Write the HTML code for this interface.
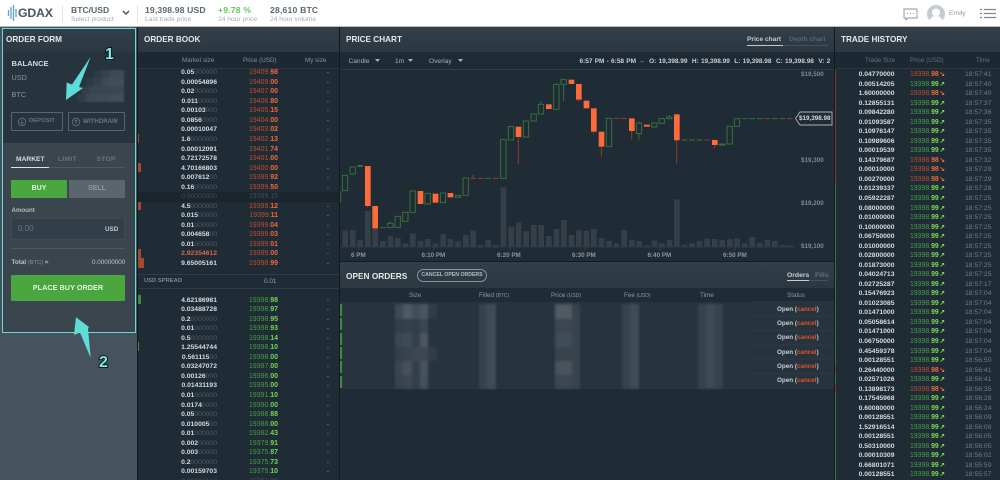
<!DOCTYPE html>
<html><head><meta charset="utf-8"><style>
html,body{margin:0;padding:0;width:1000px;height:480px;overflow:hidden;background:#1f2b35}
body{font-family:"Liberation Sans",sans-serif;position:relative;filter:blur(.35px)}
.x{position:absolute;white-space:nowrap;margin:0}
.h{font-size:8.2px;font-weight:700;color:#e4e8ea}
.bar{position:absolute;background:linear-gradient(#333f48,#2c3841)}
.t{font-size:6.3px;color:#87929a}
.ob,.th{position:absolute;font-size:6.8px}
.ob p,.th p{margin:0;height:9.54px;line-height:9.54px;position:relative}
.ob a,.th a{position:absolute;font-weight:700;color:#d5dbde;text-decoration:none}
.ob a i,.th a i{font-style:normal;color:#515c64;font-weight:400}
.ob a{right:122px}
.ob b{position:absolute;right:61px;font-size:6.95px}
.ob s{position:absolute;right:10px;text-decoration:none;color:#8f9aa1}
.ob u{text-decoration:none;font-weight:700}
.ob b,.th b{font-weight:400}
.as b{color:#c04e2c}.as u{color:#f4693a}
.bs b{color:#46a046}.bs u{color:#74d954}
.dm a,.dm a i,.dm b,.dm u,.dm s{color:#434e57!important;font-weight:400}
.th a{right:105.5px}
.th b{position:absolute;left:75px;font-size:6.9px}
.th em{position:absolute;left:104.5px;font-style:normal;font-size:6.5px;font-weight:700}
.th s{position:absolute;right:8.5px;text-decoration:none;color:#727e86}
.th u{text-decoration:none;font-weight:700}
.g b{color:#46a046}.g u,.g em{color:#7ad956}
.r b{color:#c04e2c}.r u,.r em{color:#f4693a}
.st{font-size:6.3px;color:#c8ced2;font-weight:700;left:777px}
.st span{color:#d9552e}
.db{position:absolute;left:138px;background:#a04a2e}
.pl{position:absolute;border:1px solid #59646c;border-radius:1px;box-sizing:border-box;color:#69747c;font-size:6.2px;font-weight:700}
.num{font-size:16px;font-weight:700;color:#7ce8e2;-webkit-text-stroke:2px #10181d;paint-order:stroke fill}
</style></head><body>

<!-- Top bar -->
<div class="x" style="left:0;top:0;width:1000px;height:26px;background:#fff;border-bottom:1px solid #b9bec2"></div>
<svg class="x" style="left:7px;top:5px" width="10" height="16"><path d="M1.500 5v6M4 2v12M6.500 0v16M9 4v8" stroke="#5f9fd0" stroke-width="1.300" fill="none"/></svg>
<div class="x" style="left:18px;top:6px;font-size:12.300px;font-weight:700;color:#49565f;letter-spacing:-.2px">GDAX</div>
<div class="x" style="left:62px;top:5px;width:1px;height:17px;background:#e0e3e5"></div>
<div class="x" style="left:137px;top:5px;width:1px;height:17px;background:#e0e3e5"></div>
<div class="x" style="left:71px;top:5px;font-size:8.600px;font-weight:700;color:#5b676f">BTC/USD</div>
<div class="x" style="left:71px;top:16px;font-size:6.700px;color:#a3abb1">Select product</div>
<svg class="x" style="left:122px;top:10px" width="8" height="6"><path d="M1 1l3 3 3-3" stroke="#444f57" stroke-width="1.400" fill="none"/></svg>
<div class="x" style="left:145px;top:5px;font-size:8.600px;font-weight:700;color:#5b676f;letter-spacing:.15px">19,398.98 USD</div>
<div class="x" style="left:145px;top:16px;font-size:6.700px;color:#a3abb1">Last trade price</div>
<div class="x" style="left:218px;top:5px;font-size:8.600px;font-weight:700;color:#66c65a;letter-spacing:.2px">+9.78 %</div>
<div class="x" style="left:218px;top:16px;font-size:6.700px;color:#a3abb1">24 hour price</div>
<div class="x" style="left:270px;top:5px;font-size:8.600px;font-weight:700;color:#5b676f;letter-spacing:.2px">28,610 BTC</div>
<div class="x" style="left:270px;top:16px;font-size:6.700px;color:#a3abb1">24 hour volume</div>
<svg class="x" style="left:903px;top:8px" width="15" height="13"><path d="M1 1h13v9H5l-2 2v-2H1z" fill="none" stroke="#8b959c" stroke-width=".9"/><path d="M4 5.500h1M7 5.500h1M10 5.500h1" stroke="#8b959c"/></svg>
<svg class="x" style="left:927px;top:5px" width="18" height="18"><circle cx="9" cy="9" r="9" fill="#c6cbcf"/><circle cx="9" cy="7.500" r="4" fill="#fff"/><path d="M2.500 16c1-4 4-5 6.500-5s5.500 1 6.500 5a9 9 0 0 1-13 0z" fill="#fff"/></svg>
<div class="x" style="left:949px;top:10px;font-size:6.800px;color:#8f989f">Emily</div>
<svg class="x" style="left:980px;top:8px" width="16" height="11"><path d="M0 1.500h2M4 1.500h12M0 5.500h2M4 5.500h12M0 9.500h2M4 9.500h12" stroke="#7d878e" stroke-width="1.200"/></svg>

<!-- Left column -->
<div class="x" style="left:0;top:27px;width:137px;height:453px;background:#47535c"></div>
<div class="bar" style="left:3px;top:29px;width:132px;height:23px"></div>
<div class="x" style="left:3px;top:52px;width:132px;height:91px;background:#27333d"></div>
<div class="x" style="left:3px;top:143px;width:132px;height:190px;background:#3a454e"></div>
<div class="x h" style="left:6px;top:35px">ORDER FORM</div>
<div class="x" style="left:11.500px;top:59px;font-size:7.600px;font-weight:700;color:#d5dadd">BALANCE</div>
<div class="x" style="left:11.500px;top:73px;font-size:7.300px;color:#8b959c">USD</div>
<div class="x" style="left:11.500px;top:90px;font-size:7.300px;color:#8b959c">BTC</div>
<svg class="x" style="left:76px;top:68px;filter:blur(.9px)" width="52" height="36"><g fill="#4a555e"><rect x="18" y="2" width="8" height="8" opacity=".25"/><rect x="26" y="2" width="8" height="8" opacity=".5"/><rect x="34" y="2" width="8" height="8" opacity=".7"/><rect x="42" y="2" width="6" height="8" opacity=".7"/><rect x="10" y="10" width="8" height="8" opacity=".2"/><rect x="18" y="10" width="8" height="8" opacity=".4"/><rect x="26" y="10" width="8" height="8" opacity=".7"/><rect x="34" y="10" width="8" height="8" opacity=".8"/><rect x="42" y="10" width="6" height="8" opacity=".8"/><rect x="6" y="18" width="8" height="8" opacity=".35"/><rect x="14" y="18" width="8" height="8" opacity=".55"/><rect x="22" y="18" width="8" height="8" opacity=".55"/><rect x="30" y="18" width="8" height="8" opacity=".6"/><rect x="38" y="18" width="10" height="8" opacity=".65"/><rect x="2" y="26" width="8" height="8" opacity=".3"/><rect x="10" y="26" width="8" height="8" opacity=".65"/><rect x="18" y="26" width="8" height="8" opacity=".7"/><rect x="26" y="26" width="8" height="8" opacity=".7"/><rect x="34" y="26" width="14" height="8" opacity=".8"/></g></svg>
<div class="pl" style="left:11px;top:112px;width:52px;height:19px;line-height:17px;padding-left:17px;font-size:5.900px">DEPOSIT</div>
<div class="pl" style="left:68px;top:112px;width:57px;height:19px;line-height:17px;padding-left:14px">WITHDRAW</div>
<svg class="x" style="left:17px;top:117px" width="10" height="10"><circle cx="5" cy="5" r="3.800" fill="none" stroke="#69747c" stroke-width=".8"/><path d="M5 3v4M3.500 5.500L5 7l1.500-1.500" stroke="#69747c" stroke-width=".7" fill="none"/></svg>
<svg class="x" style="left:71px;top:117px" width="10" height="10"><circle cx="5" cy="5" r="3.800" fill="none" stroke="#69747c" stroke-width=".8"/><path d="M5 7V3M3.500 4.500L5 3l1.500 1.500" stroke="#69747c" stroke-width=".7" fill="none"/></svg>
<div class="x" style="left:16px;top:156px;font-size:6.700px;font-weight:700;color:#d6dbde">MARKET</div>
<div class="x" style="left:58px;top:156px;font-size:6.700px;font-weight:700;color:#69747c;letter-spacing:.3px">LIMIT</div>
<div class="x" style="left:96.500px;top:156px;font-size:6.700px;font-weight:700;color:#69747c;letter-spacing:.3px">STOP</div>
<div class="x" style="left:11px;top:167px;width:114px;height:1px;background:#4d5861"></div>
<div class="x" style="left:11px;top:167px;width:38px;height:1px;background:#dfe3e5"></div>
<div class="x" style="left:11px;top:180px;width:56px;height:18px;background:#4aa63e;color:#dff0da;font-size:7px;font-weight:700;line-height:18px;text-align:center">BUY</div>
<div class="x" style="left:69px;top:180px;width:56px;height:18px;background:#5a656d;color:#8f999f;font-size:7px;font-weight:700;line-height:18px;text-align:center">SELL</div>
<div class="x" style="left:11.500px;top:207px;font-size:6.200px;font-weight:700;color:#b3bbc0">Amount</div>
<div class="x" style="left:11px;top:218px;width:114px;height:22px;background:#333f48;border:1px solid #3f4a53;box-sizing:border-box"></div>
<div class="x" style="left:18px;top:224px;font-size:8px;color:#68737b">0.00</div>
<div class="x" style="left:105px;top:226px;font-size:6.300px;font-weight:700;color:#c1c8cc">USD</div>
<div class="x" style="left:11px;top:248px;width:114px;height:1px;background:#4d5861"></div>
<div class="x" style="left:11.500px;top:258.500px;font-size:6.300px;font-weight:700;color:#bac1c6">Total <span style="font-weight:400;color:#8a949b;font-size:5.800px">(BTC)</span> ≈</div>
<div class="x" style="left:92px;top:258.500px;font-size:6.300px;color:#c1c8cc">0.00000000</div>
<div class="x" style="left:11px;top:275px;width:114px;height:26px;background:#4aa63e;border-radius:1px;color:#e6f2e2;font-size:7.300px;font-weight:700;line-height:26px;text-align:center">PLACE BUY ORDER</div>
<div class="x" style="left:2px;top:28px;width:134px;height:305px;box-sizing:border-box;border:1.500px solid #63dcd6"></div>
<svg class="x" style="left:0;top:27px" width="137" height="453"><path d="M90.700 29.700L79 60l4 1L66 73l.7-17.500 5.300 2z" fill="#5fdcd8"/><path d="M76 290.300L74 308l6-2.500 10.700 25.500-2.700-29.500 1-1.500z" fill="#5fdcd8"/></svg>
<div class="x num" style="left:105px;top:45.500px">1</div>
<div class="x num" style="left:99px;top:353.500px">2</div>

<!-- Order book -->
<div class="x" style="left:137px;top:27px;width:1px;height:453px;background:#12191f"></div>
<div class="bar" style="left:138px;top:27px;width:201px;height:25px"></div>
<div class="x h" style="left:144px;top:35px">ORDER BOOK</div>
<div class="x" style="left:138px;top:52px;width:201px;height:17px;background:#1c2832;border-bottom:1px solid #2c3841;box-sizing:border-box"></div>
<div class="x t" style="left:182px;top:57px">Market size</div>
<div class="x t" style="left:243px;top:57px">Price (USD)</div>
<div class="x t" style="left:305px;top:57px">My size</div>
<div class="db" style="top:134px;width:1px;height:9px"></div>
<div class="db" style="top:163px;width:3px;height:9px"></div>
<div class="db" style="top:201px;width:3px;height:9px"></div>
<div class="db" style="top:249px;width:3px;height:9px"></div>
<div class="db" style="top:258px;width:6px;height:10px"></div>
<div class="db" style="top:295px;width:3px;height:9px;background:#3f8a3a"></div>
<div class="db" style="top:342px;width:1px;height:9px;background:#3f8a3a"></div>
<div class="x" style="left:138px;top:192px;width:201px;height:9.500px;background:#1a252e"></div>
<div class="ob as" style="left:138px;top:68.300px;width:201px">
<p><a>0.05<i>000000</i></a><b>19409.<u>98</u></b><s>-</s></p>
<p><a>0.00054896</a><b>19409.<u>00</u></b><s>-</s></p>
<p><a>0.02<i>000000</i></a><b>19407.<u>00</u></b><s>-</s></p>
<p><a>0.011<i>00000</i></a><b>19406.<u>80</u></b><s>-</s></p>
<p><a>0.00103<i>000</i></a><b>19405.<u>15</u></b><s>-</s></p>
<p><a>0.0856<i>0000</i></a><b>19404.<u>00</u></b><s>-</s></p>
<p><a>0.00010047</a><b>19403.<u>02</u></b><s>-</s></p>
<p><a>1.6<i>0000000</i></a><b>19402.<u>13</u></b><s>-</s></p>
<p><a>0.00012091</a><b>19401.<u>74</u></b><s>-</s></p>
<p><a>0.72172578</a><b>19401.<u>00</u></b><s>-</s></p>
<p><a>4.70166803</a><b>19400.<u>00</u></b><s>-</s></p>
<p><a>0.007612<i>00</i></a><b>19399.<u>92</u></b><s>-</s></p>
<p><a>0.16<i>000000</i></a><b>19399.<u>50</u></b><s>-</s></p>
<p class="dm"><a>0.50000000</a><b>19399.<u>15</u></b><s>-</s></p>
<p><a>4.5<i>0000000</i></a><b>19399.<u>12</u></b><s>-</s></p>
<p><a>0.015<i>00000</i></a><b>19399.<u>11</u></b><s>-</s></p>
<p><a>0.01<i>000000</i></a><b>19399.<u>04</u></b><s>-</s></p>
<p><a>0.004658<i>00</i></a><b>19399.<u>03</u></b><s>-</s></p>
<p><a>0.01<i>000000</i></a><b>19399.<u>01</u></b><s>-</s></p>
<p><a style="color:#d0694a">2.92354612</a><b>19399.<u>00</u></b><s style="color:#d0694a">-</s></p>
<p><a>9.65005161</a><b>19398.<u>99</u></b><s>-</s></p>
</div>
<div class="x" style="left:138px;top:274px;width:201px;height:15px;border-top:1px solid #303c45;border-bottom:1px solid #303c45;box-sizing:border-box"></div>
<div class="x" style="left:144px;top:278px;font-size:5.800px;font-weight:700;color:#7d8890">USD SPREAD</div>
<div class="x" style="left:264px;top:278px;font-size:6.400px;color:#98a2a8">0.01</div>
<div class="ob bs" style="left:138px;top:295.700px;width:201px">
<p><a>4.62186981</a><b>19398.<u>98</u></b><s>-</s></p>
<p><a>0.03488728</a><b>19398.<u>97</u></b><s>-</s></p>
<p><a>0.2<i>0000000</i></a><b>19398.<u>95</u></b><s>-</s></p>
<p><a>0.01<i>000000</i></a><b>19398.<u>93</u></b><s>-</s></p>
<p><a>0.5<i>0000000</i></a><b>19398.<u>14</u></b><s>-</s></p>
<p><a>1.25544744</a><b>19398.<u>10</u></b><s>-</s></p>
<p><a>0.561115<i>00</i></a><b>19398.<u>00</u></b><s>-</s></p>
<p><a>0.03247072</a><b>19397.<u>00</u></b><s>-</s></p>
<p><a>0.00126<i>000</i></a><b>19396.<u>00</u></b><s>-</s></p>
<p><a>0.01431193</a><b>19395.<u>00</u></b><s>-</s></p>
<p><a>0.01<i>000000</i></a><b>19391.<u>10</u></b><s>-</s></p>
<p><a>0.0174<i>0000</i></a><b>19390.<u>00</u></b><s>-</s></p>
<p><a>0.05<i>000000</i></a><b>19388.<u>88</u></b><s>-</s></p>
<p><a>0.010005<i>00</i></a><b>19388.<u>00</u></b><s>-</s></p>
<p><a>0.01<i>000000</i></a><b>19382.<u>43</u></b><s>-</s></p>
<p><a>0.002<i>00000</i></a><b>19379.<u>91</u></b><s>-</s></p>
<p><a>0.003<i>00000</i></a><b>19375.<u>87</u></b><s>-</s></p>
<p><a>0.2<i>0000000</i></a><b>19375.<u>73</u></b><s>-</s></p>
<p><a>0.00159703</a><b>19375.<u>10</u></b><s>-</s></p>
<p class="dm"><a>0.00010133</a><b>19351.<u>96</u></b><s>-</s></p>
</div>

<!-- Price chart -->
<div class="x" style="left:339px;top:27px;width:1px;height:453px;background:#12191f"></div>
<div class="bar" style="left:340px;top:27px;width:494px;height:25px"></div>
<div class="x h" style="left:346px;top:35px">PRICE CHART</div>
<div class="x" style="left:747px;top:36px;font-size:6.600px;font-weight:700;color:#c3cacf">Price chart</div>
<div class="x" style="left:789px;top:36px;font-size:6.600px;font-weight:700;color:#59646c">Depth chart</div>
<div class="x" style="left:747px;top:45px;width:81px;height:1px;background:#46525b"></div>
<div class="x" style="left:747px;top:45px;width:36px;height:1px;background:#c3cacf"></div>
<div class="x" style="left:340px;top:52px;width:494px;height:18px;border-bottom:1px solid #323e47;box-sizing:border-box;background:#1e2a34"></div>
<div class="x" style="left:348.500px;top:58px;font-size:6.600px;color:#a7b0b6">Candle</div>
<div class="x" style="left:395px;top:58px;font-size:6.600px;color:#a7b0b6">1m</div>
<div class="x" style="left:429px;top:58px;font-size:6.600px;color:#a7b0b6">Overlay</div>
<svg class="x" style="left:340px;top:52px" width="140" height="18"><path d="M35 7h5l-2.500 3zM68 7h5l-2.500 3zM118 7h5l-2.500 3z" fill="#a7b0b6"/></svg>
<div class="x" style="left:579.500px;top:58px;font-size:6.500px;font-weight:700;color:#c8ced2;word-spacing:.4px">6:57 PM - 6:58 PM →&nbsp; O: 19,398.99&nbsp; H: 19,398.99&nbsp; L: 19,398.98&nbsp; C: 19,398.98&nbsp; V: 2</div>

<svg class="x" style="left:340px;top:20px" width="500" height="250" viewBox="0 0 1500 750">
<g fill="#353f48">
<rect x="7" y="632" width="17" height="48"/><rect x="30" y="630" width="17" height="50"/><rect x="52" y="660" width="17" height="20"/><rect x="75" y="573" width="17" height="107"/><rect x="97" y="625" width="17" height="55"/><rect x="120" y="663" width="17" height="17"/><rect x="143" y="648" width="17" height="32"/><rect x="165" y="654" width="17" height="26"/><rect x="188" y="670" width="17" height="10"/><rect x="210" y="640" width="17" height="40"/><rect x="233" y="663" width="17" height="17"/><rect x="255" y="657" width="17" height="23"/><rect x="278" y="670" width="17" height="10"/><rect x="301" y="642" width="17" height="38"/><rect x="323" y="657" width="17" height="23"/><rect x="346" y="664" width="17" height="16"/><rect x="369" y="645" width="17" height="35"/><rect x="391" y="632" width="17" height="48"/><rect x="414" y="675" width="17" height="5"/><rect x="436" y="660" width="17" height="20"/><rect x="459" y="675" width="17" height="5"/><rect x="482" y="502" width="17" height="178"/><rect x="505" y="620" width="17" height="60"/><rect x="527" y="607" width="17" height="73"/><rect x="550" y="634" width="17" height="46"/><rect x="573" y="615" width="17" height="65"/><rect x="595" y="615" width="17" height="65"/><rect x="618" y="648" width="17" height="32"/><rect x="641" y="627" width="17" height="53"/><rect x="663" y="600" width="17" height="80"/><rect x="686" y="645" width="17" height="35"/><rect x="708" y="631" width="17" height="49"/><rect x="731" y="633" width="17" height="47"/><rect x="753" y="627" width="17" height="53"/><rect x="776" y="654" width="17" height="26"/><rect x="799" y="662" width="17" height="18"/><rect x="821" y="670" width="17" height="10"/><rect x="844" y="630" width="17" height="50"/><rect x="867" y="659" width="17" height="21"/><rect x="889" y="663" width="17" height="17"/><rect x="912" y="676" width="17" height="4"/><rect x="935" y="661" width="17" height="19"/><rect x="957" y="670" width="17" height="10"/><rect x="980" y="660" width="17" height="20"/><rect x="1002" y="538" width="17" height="142"/><rect x="1025" y="674" width="17" height="6"/><rect x="1048" y="670" width="17" height="10"/><rect x="1070" y="663" width="17" height="17"/><rect x="1093" y="656" width="17" height="24"/><rect x="1116" y="657" width="17" height="23"/><rect x="1138" y="660" width="17" height="20"/><rect x="1161" y="657" width="17" height="23"/><rect x="1183" y="655" width="17" height="25"/><rect x="1206" y="670" width="17" height="10"/><rect x="1228" y="651" width="17" height="29"/><rect x="1251" y="669" width="17" height="11"/><rect x="1274" y="660" width="17" height="20"/><rect x="1296" y="663" width="17" height="17"/><rect x="1319" y="674" width="17" height="6"/><rect x="1341" y="676" width="17" height="4"/>
</g>
<path d="M0 681H1365" stroke="#36424b" stroke-width="2"/>
<g fill="none" stroke="#3a763c" stroke-width="2.800">
<rect x="-6" y="515" width="8" height="30"/><rect x="7" y="466" width="16" height="46"/><rect x="30" y="441" width="16" height="21"/><rect x="143" y="610" width="16" height="13"/><rect x="165" y="589" width="16" height="33"/><rect x="188" y="577" width="16" height="27"/><rect x="210" y="513" width="16" height="64"/><rect x="255" y="520" width="16" height="32"/><rect x="301" y="519" width="16" height="29"/><rect x="346" y="526" width="16" height="6"/><rect x="369" y="474" width="16" height="52"/><rect x="482" y="359" width="16" height="116"/><rect x="505" y="320" width="16" height="40"/><rect x="550" y="303" width="16" height="48"/><rect x="573" y="282" width="16" height="21"/><rect x="595" y="253" width="16" height="29"/><rect x="641" y="193" width="16" height="75"/><rect x="663" y="179" width="16" height="14"/><rect x="799" y="295" width="16" height="85"/><rect x="889" y="309" width="16" height="32"/><rect x="935" y="309" width="16" height="12"/><rect x="957" y="296" width="16" height="14"/><rect x="980" y="291" width="16" height="5"/><rect x="1138" y="372" width="16" height="3"/><rect x="1161" y="319" width="16" height="53"/><rect x="1183" y="296" width="16" height="23"/>
<path d="M151 610v-6M671 193v50M603 253v-9M897 341v17M897 309v-4M988 291v-6M513 320v-3M120 623h17M436 475h17M1025 360h17M1048 360h17M1070 360h17M1206 296h17M1228 296h17M1251 296h17M1296 296h17M1319 296h17"/>
</g>
<path d="M52 438h17" stroke="#5aa84e" stroke-width="3"/>
<g fill="#ff6a3a">
<rect x="75" y="438" width="17" height="120"/><rect x="97" y="558" width="17" height="67"/><rect x="233" y="513" width="17" height="39"/><rect x="278" y="521" width="17" height="27"/><rect x="323" y="519" width="17" height="13"/><rect x="527" y="320" width="17" height="31"/><rect x="618" y="253" width="17" height="14"/><rect x="686" y="179" width="17" height="13"/><rect x="708" y="192" width="17" height="47"/><rect x="731" y="242" width="17" height="23"/><rect x="753" y="265" width="17" height="70"/><rect x="776" y="335" width="17" height="45"/><rect x="867" y="295" width="17" height="38"/><rect x="912" y="314" width="17" height="6"/><rect x="1002" y="283" width="17" height="78"/><rect x="1116" y="360" width="17" height="15"/>
</g>
<g fill="none" stroke="#8d4029" stroke-width="3">
<path d="M535 351v81M784 380v30M761 335v8M875 333v25M1010 361v69M1124 375v10M399 475v-10M391 475h17M414 475h17M459 475h17M821 295h17M844 295h17M1093 360h17M1274 296h17M1341 296h17M83 558v5M105 625v6M716 239v5"/>
</g>
</svg>
<svg class="x" style="left:340px;top:247px" width="500" height="4" viewBox="0 0 500 4"><path d="M19 0v3M94 0v3M170 0v3M245 0v3M320 0v3M395 0v3" stroke="#36424b"/></svg>
<div class="x t" style="left:801px;top:71px;font-weight:700;color:#7f8a91">$19,500</div>
<div class="x t" style="left:801px;top:157px;font-weight:700;color:#7f8a91">$19,300</div>
<div class="x t" style="left:801px;top:200px;font-weight:700;color:#7f8a91">$19,200</div>
<div class="x t" style="left:801px;top:242.500px;font-weight:700;color:#7f8a91">$19,100</div>
<svg class="x" style="left:794px;top:111px" width="39" height="15"><path d="M1.500 7.500L6 1h32v13H6z" fill="#1f2b35" stroke="#aab3b8" stroke-width=".9"/></svg>
<div class="x" style="left:799px;top:115px;font-size:6.300px;font-weight:700;color:#d4d9dc">$19,398.98</div>
<div class="x t" style="left:351px;top:251.500px;font-weight:700;color:#8b959c">6 PM</div>
<div class="x t" style="left:421.500px;top:251.500px;font-weight:700;color:#8b959c">6:10 PM</div>
<div class="x t" style="left:497px;top:251.500px;font-weight:700;color:#8b959c">6:20 PM</div>
<div class="x t" style="left:572px;top:251.500px;font-weight:700;color:#8b959c">6:30 PM</div>
<div class="x t" style="left:647.500px;top:251.500px;font-weight:700;color:#8b959c">6:40 PM</div>
<div class="x t" style="left:723px;top:251.500px;font-weight:700;color:#8b959c">6:50 PM</div>

<!-- Open orders -->
<div class="bar" style="left:340px;top:262px;width:494px;height:26px"></div>
<div class="x" style="left:340px;top:261px;width:494px;height:1px;background:#141c23"></div>
<div class="x h" style="left:346px;top:270.500px;font-size:8.300px">OPEN ORDERS</div>
<div class="x" style="left:417px;top:269px;width:70px;height:13px;border:1px solid #8a959c;border-radius:7px;box-sizing:border-box;color:#b5bdc2;font-size:5.200px;font-weight:700;line-height:11px;text-align:center">CANCEL OPEN ORDERS</div>
<div class="x" style="left:787px;top:272px;font-size:6.800px;font-weight:700;color:#c8ced2">Orders</div>
<div class="x" style="left:815px;top:272px;font-size:6.800px;font-weight:700;color:#66717a">Fills</div>
<div class="x" style="left:787px;top:280px;width:41px;height:1px;background:#46525b"></div>
<div class="x" style="left:787px;top:280px;width:22px;height:1px;background:#c8ced2"></div>
<div class="x" style="left:340px;top:288px;width:494px;height:14px;background:#1f2b35"></div>
<div class="x" style="left:340px;top:302px;width:494px;height:87px;background:#27333d"></div>
<div class="x t" style="left:409px;top:291.500px;color:#8f999f">Size</div>
<div class="x t" style="left:479px;top:291.500px;color:#8f999f">Filled <span style="font-size:5px">(BTC)</span></div>
<div class="x t" style="left:551px;top:291.500px;color:#8f999f">Price <span style="font-size:5px">(USD)</span></div>
<div class="x t" style="left:624px;top:291.500px;color:#8f999f">Fee <span style="font-size:5px">(USD)</span></div>
<div class="x t" style="left:700px;top:291.500px;color:#8f999f">Time</div>
<div class="x t" style="left:787px;top:291.500px;color:#8f999f">Status</div>
<svg class="x" style="left:340px;top:300px;filter:blur(1.2px)" width="400" height="92">
<g fill="#6a757d">
<rect x="55" y="4" width="8" height="15" opacity=".35"/><rect x="63" y="4" width="9" height="15" opacity=".6"/><rect x="72" y="4" width="8" height="15" opacity=".4"/><rect x="80" y="4" width="8" height="15" opacity=".55"/><rect x="88" y="4" width="9" height="15" opacity=".15"/>
<rect x="55" y="19" width="8" height="14" opacity=".18"/><rect x="63" y="19" width="9" height="14" opacity=".22"/><rect x="72" y="19" width="8" height="14" opacity=".18"/><rect x="80" y="19" width="8" height="14" opacity=".3"/>
<rect x="55" y="33" width="8" height="14" opacity=".3"/><rect x="63" y="33" width="9" height="14" opacity=".35"/><rect x="72" y="33" width="8" height="14" opacity=".2"/><rect x="80" y="33" width="8" height="14" opacity=".55"/>
<rect x="55" y="47" width="8" height="14" opacity=".2"/><rect x="63" y="47" width="9" height="14" opacity=".25"/><rect x="72" y="47" width="8" height="14" opacity=".3"/><rect x="80" y="47" width="8" height="14" opacity=".3"/><rect x="88" y="47" width="9" height="14" opacity=".15"/>
<rect x="55" y="61" width="8" height="14" opacity=".3"/><rect x="63" y="61" width="9" height="14" opacity=".45"/><rect x="72" y="61" width="8" height="14" opacity=".2"/><rect x="80" y="61" width="8" height="14" opacity=".5"/>
<rect x="55" y="75" width="8" height="14" opacity=".25"/><rect x="63" y="75" width="9" height="14" opacity=".3"/><rect x="72" y="75" width="8" height="14" opacity=".2"/><rect x="80" y="75" width="8" height="14" opacity=".45"/>
<rect x="139" y="4" width="8" height="85" opacity=".25"/><rect x="147" y="4" width="9" height="85" opacity=".38"/>
<rect x="215" y="4" width="17" height="15" opacity=".6"/><rect x="215" y="19" width="17" height="14" opacity=".3"/><rect x="215" y="33" width="17" height="14" opacity=".4"/><rect x="215" y="47" width="17" height="14" opacity=".25"/><rect x="215" y="61" width="17" height="14" opacity=".5"/><rect x="215" y="75" width="17" height="14" opacity=".3"/><rect x="232" y="4" width="8" height="85" opacity=".25"/>
<rect x="282" y="4" width="8" height="85" opacity=".25"/><rect x="290" y="4" width="9" height="85" opacity=".38"/>
<rect x="358" y="4" width="8" height="85" opacity=".25"/><rect x="366" y="4" width="9" height="85" opacity=".35"/><rect x="375" y="4" width="8" height="85" opacity=".25"/>
</g>
</svg>
<svg class="x" style="left:340px;top:300px" width="494" height="92">
<path d="M1 4v12M1 18v12M1 33v12M1 47v12M1 61v12M1 76v12" stroke="#4aa63e" stroke-width="1.500"/>
<path d="M412 2h82M412 16.500h82M412 30.500h82M412 45h82M412 59h82M412 73.500h82" stroke="#323e47" stroke-width=".8"/>
</svg>
<div class="x st" style="top:305.500px">Open (<span>cancel</span>)</div>
<div class="x st" style="top:320px">Open (<span>cancel</span>)</div>
<div class="x st" style="top:334px">Open (<span>cancel</span>)</div>
<div class="x st" style="top:348.500px">Open (<span>cancel</span>)</div>
<div class="x st" style="top:362.500px">Open (<span>cancel</span>)</div>
<div class="x st" style="top:377px">Open (<span>cancel</span>)</div>

<!-- Trade history -->
<div class="x" style="left:834px;top:27px;width:1px;height:453px;background:#12191f"></div>
<div class="x" style="left:835px;top:70px;width:1px;height:113px;background:#7a3d2b"></div>
<div class="x" style="left:835px;top:183px;width:1px;height:297px;background:#3b7a3b"></div>
<div class="x" style="left:835px;top:365px;width:1px;height:9px;background:#7a3d2b"></div>
<div class="x" style="left:835px;top:384px;width:1px;height:9px;background:#7a3d2b"></div>
<div class="bar" style="left:835px;top:27px;width:165px;height:25px"></div>
<div class="x h" style="left:841px;top:35px">TRADE HISTORY</div>
<div class="x" style="left:835px;top:52px;width:165px;height:17px;background:#1c2832;border-bottom:1px solid #2c3841;box-sizing:border-box"></div>
<div class="x t" style="left:865px;top:57px;color:#67727a">Trade Size</div>
<div class="x t" style="left:910px;top:57px;color:#67727a">Price (USD)</div>
<div class="x t" style="left:976px;top:57px;color:#67727a">Time</div>
<div class="th" style="left:835px;top:70.100px;width:165px">
<p class="r"><a>0.04770000</a><b>19398.<u>98</u></b><em>↘</em><s>18:57:41</s></p>
<p class="g"><a>0.00514205</a><b>19398.<u>99</u></b><em>↗</em><s>18:57:40</s></p>
<p class="r"><a>1.60000000</a><b>19398.<u>98</u></b><em>↘</em><s>18:57:40</s></p>
<p class="g"><a>0.12855131</a><b>19398.<u>99</u></b><em>↗</em><s>18:57:37</s></p>
<p class="g"><a>0.09842280</a><b>19398.<u>99</u></b><em>↗</em><s>18:57:36</s></p>
<p class="g"><a>0.01093587</a><b>19398.<u>99</u></b><em>↗</em><s>18:57:35</s></p>
<p class="g"><a>0.10976147</a><b>19398.<u>99</u></b><em>↗</em><s>18:57:35</s></p>
<p class="g"><a>0.10989606</a><b>19398.<u>99</u></b><em>↗</em><s>18:57:35</s></p>
<p class="g"><a>0.00019539</a><b>19398.<u>99</u></b><em>↗</em><s>18:57:35</s></p>
<p class="r"><a>0.14379687</a><b>19398.<u>98</u></b><em>↘</em><s>18:57:32</s></p>
<p class="r"><a>0.00010000</a><b>19398.<u>98</u></b><em>↘</em><s>18:57:29</s></p>
<p class="r"><a>0.00270000</a><b>19398.<u>98</u></b><em>↘</em><s>18:57:29</s></p>
<p class="g"><a>0.01239337</a><b>19398.<u>99</u></b><em>↗</em><s>18:57:28</s></p>
<p class="g"><a>0.05922287</a><b>19398.<u>99</u></b><em>↗</em><s>18:57:25</s></p>
<p class="g"><a>0.08000000</a><b>19398.<u>99</u></b><em>↗</em><s>18:57:25</s></p>
<p class="g"><a>0.01000000</a><b>19398.<u>99</u></b><em>↗</em><s>18:57:25</s></p>
<p class="g"><a>0.10000000</a><b>19398.<u>99</u></b><em>↗</em><s>18:57:25</s></p>
<p class="g"><a>0.06750000</a><b>19398.<u>99</u></b><em>↗</em><s>18:57:25</s></p>
<p class="g"><a>0.01000000</a><b>19398.<u>99</u></b><em>↗</em><s>18:57:25</s></p>
<p class="g"><a>0.02800000</a><b>19398.<u>99</u></b><em>↗</em><s>18:57:25</s></p>
<p class="g"><a>0.01873000</a><b>19398.<u>99</u></b><em>↗</em><s>18:57:25</s></p>
<p class="g"><a>0.04024713</a><b>19398.<u>99</u></b><em>↗</em><s>18:57:25</s></p>
<p class="g"><a>0.02725287</a><b>19398.<u>99</u></b><em>↗</em><s>18:57:17</s></p>
<p class="g"><a>0.15476923</a><b>19398.<u>99</u></b><em>↗</em><s>18:57:04</s></p>
<p class="g"><a>0.01023085</a><b>19398.<u>99</u></b><em>↗</em><s>18:57:04</s></p>
<p class="g"><a>0.01471000</a><b>19398.<u>99</u></b><em>↗</em><s>18:57:04</s></p>
<p class="g"><a>0.05058614</a><b>19398.<u>99</u></b><em>↗</em><s>18:57:04</s></p>
<p class="g"><a>0.01471000</a><b>19398.<u>99</u></b><em>↗</em><s>18:57:04</s></p>
<p class="g"><a>0.06750000</a><b>19398.<u>99</u></b><em>↗</em><s>18:57:04</s></p>
<p class="g"><a>0.45459378</a><b>19398.<u>99</u></b><em>↗</em><s>18:57:04</s></p>
<p class="g"><a>0.00128551</a><b>19398.<u>99</u></b><em>↗</em><s>18:56:50</s></p>
<p class="r"><a>0.26440000</a><b>19398.<u>98</u></b><em>↘</em><s>18:56:41</s></p>
<p class="g"><a>0.02571026</a><b>19398.<u>99</u></b><em>↗</em><s>18:56:41</s></p>
<p class="r"><a>0.13898173</a><b>19398.<u>98</u></b><em>↘</em><s>18:56:35</s></p>
<p class="g"><a>0.17545968</a><b>19398.<u>99</u></b><em>↗</em><s>18:56:28</s></p>
<p class="g"><a>0.60080000</a><b>19398.<u>99</u></b><em>↗</em><s>18:56:24</s></p>
<p class="g"><a>0.00128551</a><b>19398.<u>99</u></b><em>↗</em><s>18:56:09</s></p>
<p class="g"><a>1.52916514</a><b>19398.<u>99</u></b><em>↗</em><s>18:56:08</s></p>
<p class="g"><a>0.00128551</a><b>19398.<u>99</u></b><em>↗</em><s>18:56:05</s></p>
<p class="g"><a>0.50310000</a><b>19398.<u>99</u></b><em>↗</em><s>18:56:05</s></p>
<p class="g"><a>0.00010309</a><b>19398.<u>99</u></b><em>↗</em><s>18:56:02</s></p>
<p class="g"><a>0.66801071</a><b>19398.<u>99</u></b><em>↗</em><s>18:55:59</s></p>
<p class="g"><a>0.00128551</a><b>19398.<u>99</u></b><em>↗</em><s>18:55:57</s></p>
</div>
</body></html>
